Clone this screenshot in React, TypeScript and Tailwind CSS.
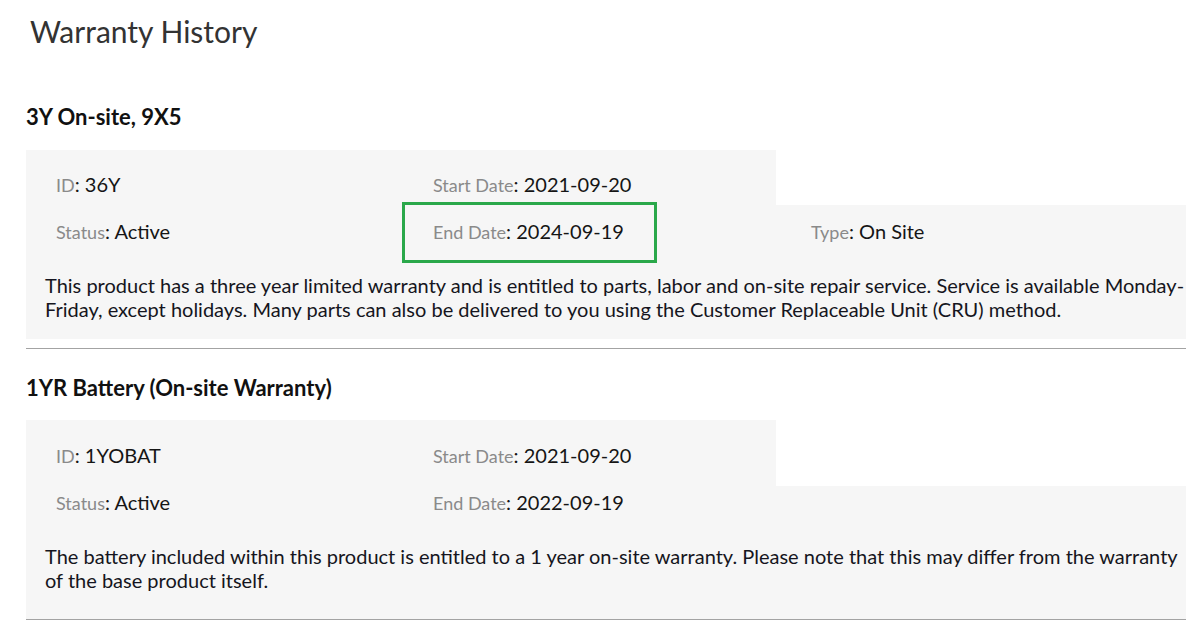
const warranties = [
    {
        title: "3Y On-site, 9X5",
        id: "36Y",
        start: "2021-09-20",
        end: "2024-09-19",
        type: "On Site",
        highlight: true,
        text: "This product has a three year limited warranty and is entitled to parts, labor and on-site repair service. Service is available Monday-Friday, except holidays. Many parts can also be delivered to you using the Customer Replaceable Unit (CRU) method.",
    },
    {
        title: "1YR Battery (On-site Warranty)",
        id: "1YOBAT",
        start: "2021-09-20",
        end: "2022-09-19",
        type: "",
        highlight: false,
        text: "The battery included within this product is entitled to a 1 year on-site warranty. Please note that this may differ from the warranty of the base product itself.",
    },
];

const Field = ({ label, value }: { label: string; value: string }) => (
    <span className="leading-[24px] whitespace-nowrap">
        <span className="text-[#8a8a8a] text-[18px]">{label}</span>
        <span className="text-[20px] text-[#151515]">: {value}</span>
    </span>
);

const App = () => {
    return (
        <div className="w-full min-h-[636px] bg-white font-['Lato',sans-serif] text-[#151515]">
            <h1 className="pl-[30px] pt-[14px] text-[30px] leading-[34px] text-[#333]">
                Warranty History
            </h1>
            <div className="pl-[26px] pr-[3px] mt-[55px]">
                {warranties.map((w, i) => (
                    <section key={w.id} className={i === 0 ? "" : "mt-[25px]"}>
                        <h3 className="text-[22px] leading-[28px] font-bold text-[#111]">
                            {w.title}
                        </h3>
                        <div className={i === 0 ? "mt-[19px]" : "mt-[18px]"}>
                            <div className="flex">
                                <div
                                    className={`w-[750px] bg-[#f6f6f6] pl-[30px] grid grid-cols-[377px_1fr] ${
                                        i === 0 ? "h-[55px] pt-[22px]" : "h-[66px] pt-[23px]"
                                    }`}
                                >
                                    <Field label="ID" value={w.id} />
                                    <Field label="Start Date" value={w.start} />
                                </div>
                            </div>
                            <div
                                className={`bg-[#f6f6f6] ${
                                    i === 0 ? "pt-[14px] pb-[18px]" : "pt-[4px] pb-[27px]"
                                }`}
                            >
                                <div className="pl-[30px] grid grid-cols-[377px_378px_1fr]">
                                    <Field label="Status" value="Active" />
                                    <span className="relative">
                                        <Field label="End Date" value={w.end} />
                                        {w.highlight && (
                                            <span className="absolute -left-[31px] -top-[17px] w-[255px] h-[61px] border-[3px] border-[#2aa84a]" />
                                        )}
                                    </span>
                                    {w.type ? <Field label="Type" value={w.type} /> : <span />}
                                </div>
                                <p className="mt-[28px] pl-[19px] text-[20px] leading-[24px] text-[#151520]">
                                    {w.text}
                                </p>
                            </div>
                            <div className={`h-px bg-[#a3a3a3] ${i === 0 ? "mt-[9px]" : ""}`} />
                        </div>
                    </section>
                ))}
            </div>
        </div>
    );
};

export default App;
